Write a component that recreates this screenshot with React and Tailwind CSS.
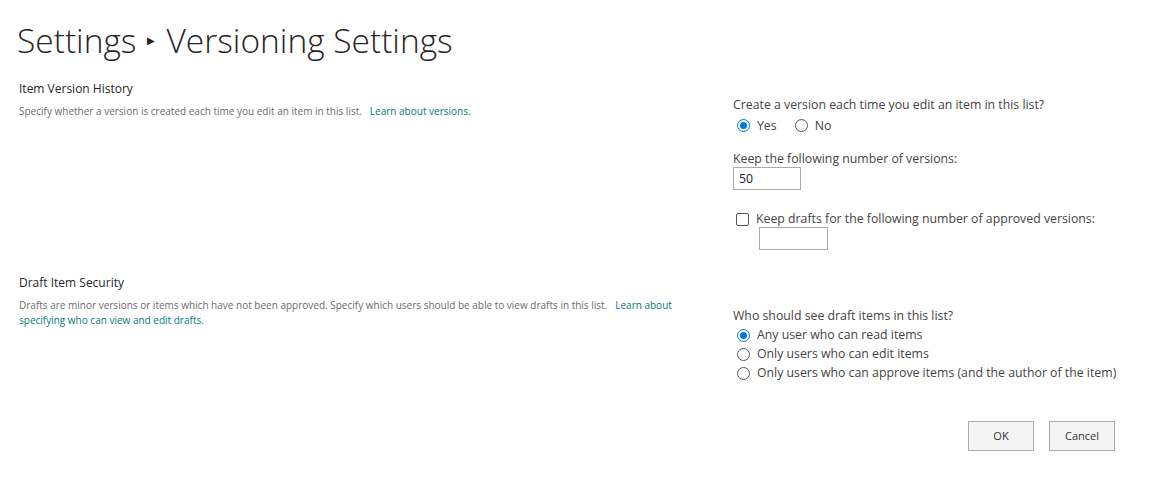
import React from 'react';

const font = { fontFamily: '"Open Sans", "Noto Sans", sans-serif' };

function Radio({ checked, label }) {
  return (
    <label className="flex items-center gap-[7px] h-[19px]">
      {checked ? (
        <span className="w-[13px] h-[13px] rounded-full border border-[#0078d4] flex items-center justify-center">
          <span className="w-[7px] h-[7px] rounded-full bg-[#0078d4]" />
        </span>
      ) : (
        <span className="w-[13px] h-[13px] rounded-full border border-[#555]" />
      )}
      <span>{label}</span>
    </label>
  );
}

function Section({ title, children, right }) {
  return (
    <div className="grid grid-cols-[714px_1fr]">
      <div>
        <div className="text-[12px] text-[#262626]">{title}</div>
        <div className="mt-[6px] w-[680px] text-[10px] leading-[15px] text-[#6b6b6b]">{children}</div>
      </div>
      <div>{right}</div>
    </div>
  );
}

export default function App() {
  return (
    <div className="w-[1176px] h-[481px] bg-white pl-[19px] text-[#333]" style={font}>
      <h1 className="flex items-center pt-[16px] text-[33.5px] font-light text-[#262626] leading-[48px] ml-[-2px]">
        <span>Settings</span>
        <span className="mx-[11px] text-[10px] text-[#222]">▶</span>
        <span>Versioning Settings</span>
      </h1>

      <div className="mt-[16px]">
        <Section
          title="Item Version History"
          right={
            <div className="pt-[16px] text-[12.3px] text-[#444]">
              <div>Create a version each time you edit an item in this list?</div>
              <div className="flex gap-[18px] ml-[4px] mt-[2px]">
                <Radio checked label="Yes" />
                <Radio label="No" />
              </div>
              <div className="mt-[15px]">Keep the following number of versions:</div>
              <input
                defaultValue="50"
                className="mt-[-2px] w-[68px] h-[23px] border border-[#ababab] px-[5px] text-[12.3px] text-[#222] outline-none"
              />
              <div className="mt-[20px] ml-[3px] flex items-center gap-[7px]">
                <span className="w-[13px] h-[13px] rounded-[2px] border border-[#555]" />
                <span>Keep drafts for the following number of approved versions:</span>
              </div>
              <input className="mt-[-1px] ml-[26px] w-[69px] h-[23px] border border-[#ababab] outline-none" />
            </div>
          }
        >
          Specify whether a version is created each time you edit an item in this list.
          <a className="ml-[8px] text-[#03787c]">Learn about versions.</a>
        </Section>

        <div className="mt-[24px]">
          <Section
            title="Draft Item Security"
            right={
              <div className="pt-[33px] text-[12.3px] text-[#444]">
                <div>Who should see draft items in this list?</div>
                <div className="ml-[4px] flex flex-col">
                  <Radio checked label="Any user who can read items" />
                  <Radio label="Only users who can edit items" />
                  <Radio label="Only users who can approve items (and the author of the item)" />
                </div>
              </div>
            }
          >
            Drafts are minor versions or items which have not been approved. Specify which users should be able to view drafts in this list.
            <a className="ml-[8px] text-[#03787c]">Learn about specifying who can view and edit drafts.</a>
          </Section>
        </div>
      </div>

      <div className="flex justify-end gap-[15px] pr-[61px] mt-[38px] text-[11px] text-[#333]">
        <button className="w-[66px] h-[30px] border border-[#ababab] bg-[#f4f4f4]">OK</button>
        <button className="w-[66px] h-[30px] border border-[#ababab] bg-[#f4f4f4]">Cancel</button>
      </div>
    </div>
  );
}
